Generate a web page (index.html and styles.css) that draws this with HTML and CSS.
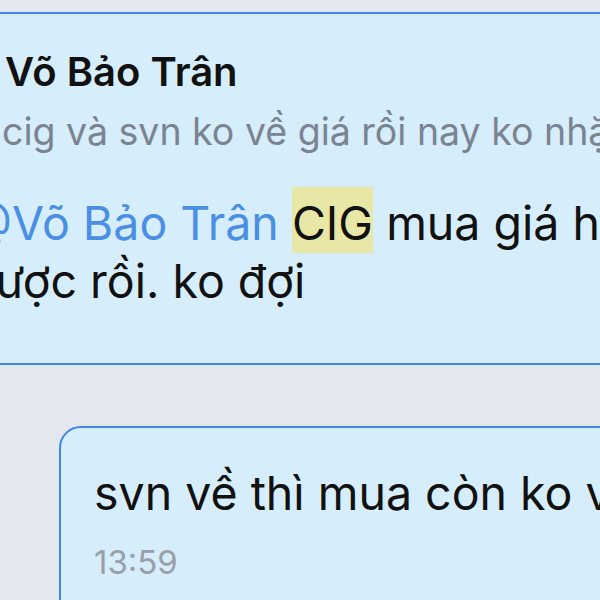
FILE: index.html
```html
<!DOCTYPE html>
<html>
<head>
<meta charset="utf-8">
<title>Chat</title>
<link rel="stylesheet" href="styles.css">
</head>
<body>
	<div class="chat">
		<div class="msg msg-in">
			<div class="reply">
				<div class="reply-name">Võ Bảo Trân</div>
				<div class="reply-text">cig và svn ko về giá rồi nay ko nhặt được</div>
			</div>
			<div class="msg-text">
				<span class="mention">@Võ Bảo Trân</span> <span class="mark">CIG</span> mua giá hôm nay<br>được rồi. ko đợi
			</div>
		</div>
		<div class="msg msg-out">
			<div class="msg-text">svn về thì mua còn ko vậy</div>
			<div class="msg-time">13:59</div>
		</div>
	</div>
</body>
</html>
```

FILE: styles.css
```css
html, body {margin:0; padding:0;}
body {background:#e3e7f0; overflow:hidden; height:600px; font-family:Inter,"Liberation Sans",sans-serif; color:#111;}

.chat {padding-top:12px;}
.msg {background:#d6edfb; border:2px solid #3f86e7; white-space:nowrap;}

.msg-in {margin:0 -60px; padding:35px 0 53px 25px;}
.reply {margin-left:38px;}
.reply-name {font-size:40px; line-height:46px; font-weight:600;}
.reply-text {font-size:37.5px; line-height:46px; color:#7a8491; margin:14px 0 0 -3px;}

.msg-text {font-size:46.5px; line-height:58px;}
.msg-in .msg-text {margin-top:39px;}
.mention {color:#4a8fe3;}
.mark {background:#e9e7a6; padding:8px 0 2px;}

.msg-out {margin:61px -80px 0 59px; padding:36px 0 40px 33px; border-radius:22px;}
.msg-time {font-size:33px; line-height:40px; color:#9aa0a8; margin-top:20px;}
```
